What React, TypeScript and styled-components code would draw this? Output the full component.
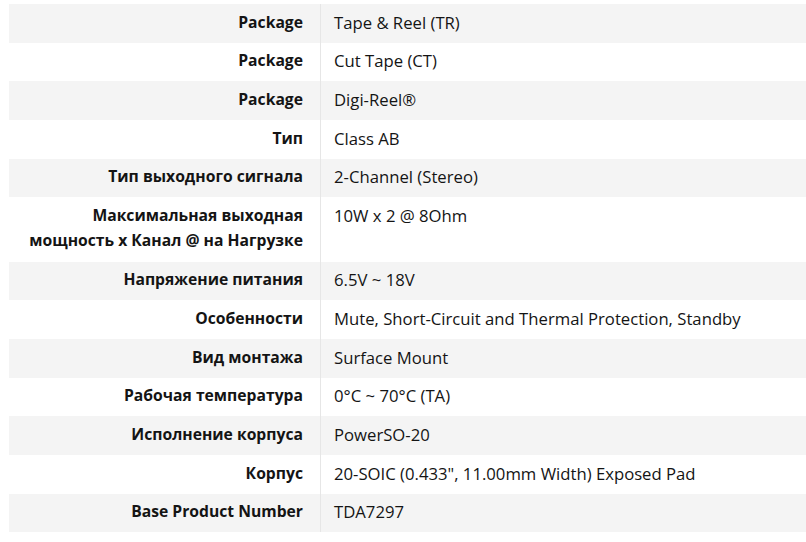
import React from "react";
import styled, { createGlobalStyle } from "styled-components";

const Global = createGlobalStyle`
  html, body { margin: 0; padding: 0; background: #ffffff; }
  body { font-family: "Open Sans", "Noto Sans", sans-serif; }
`;

const Page = styled.div`
  padding: 4px 0 0 9px;
`;

const Table = styled.table`
  width: 797px;
  border-collapse: collapse;
  line-height: 25.5px;
  color: #141414;
`;

const Row = styled.tr<{ $shade: boolean }>`
  background: ${(p) => (p.$shade ? "#f4f4f4" : "#ffffff")};
`;

const Label = styled.th`
  width: 294px;
  padding: 5.5px 17px 7.7px 0;
  text-align: right;
  vertical-align: top;
  font-size: 15.7px;
  font-weight: 700;
  border-right: 1px solid #e6e6e6;
`;

const Value = styled.td`
  padding: 5.5px 0 7.7px 13px;
  text-align: left;
  vertical-align: top;
  font-size: 16.7px;
  font-weight: 400;
`;

const rows: [React.ReactNode, string][] = [
  ["Package", "Tape & Reel (TR)"],
  ["Package", "Cut Tape (CT)"],
  ["Package", "Digi-Reel®"],
  ["Тип", "Class AB"],
  ["Тип выходного сигнала", "2-Channel (Stereo)"],
  [
    <>
      Максимальная выходная
      <br />
      мощность x Канал @ на Нагрузке
    </>,
    "10W x 2 @ 8Ohm",
  ],
  ["Напряжение питания", "6.5V ~ 18V"],
  ["Особенности", "Mute, Short-Circuit and Thermal Protection, Standby"],
  ["Вид монтажа", "Surface Mount"],
  ["Рабочая температура", "0°C ~ 70°C (TA)"],
  ["Исполнение корпуса", "PowerSO-20"],
  ["Корпус", "20-SOIC (0.433\", 11.00mm Width) Exposed Pad"],
  ["Base Product Number", "TDA7297"],
];

export default function App() {
  return (
    <>
      <Global />
      <Page>
        <Table>
          <tbody>
            {rows.map(([label, value], i) => (
              <Row key={i} $shade={i % 2 === 0}>
                <Label>{label}</Label>
                <Value>{value}</Value>
              </Row>
            ))}
          </tbody>
        </Table>
      </Page>
    </>
  );
}
